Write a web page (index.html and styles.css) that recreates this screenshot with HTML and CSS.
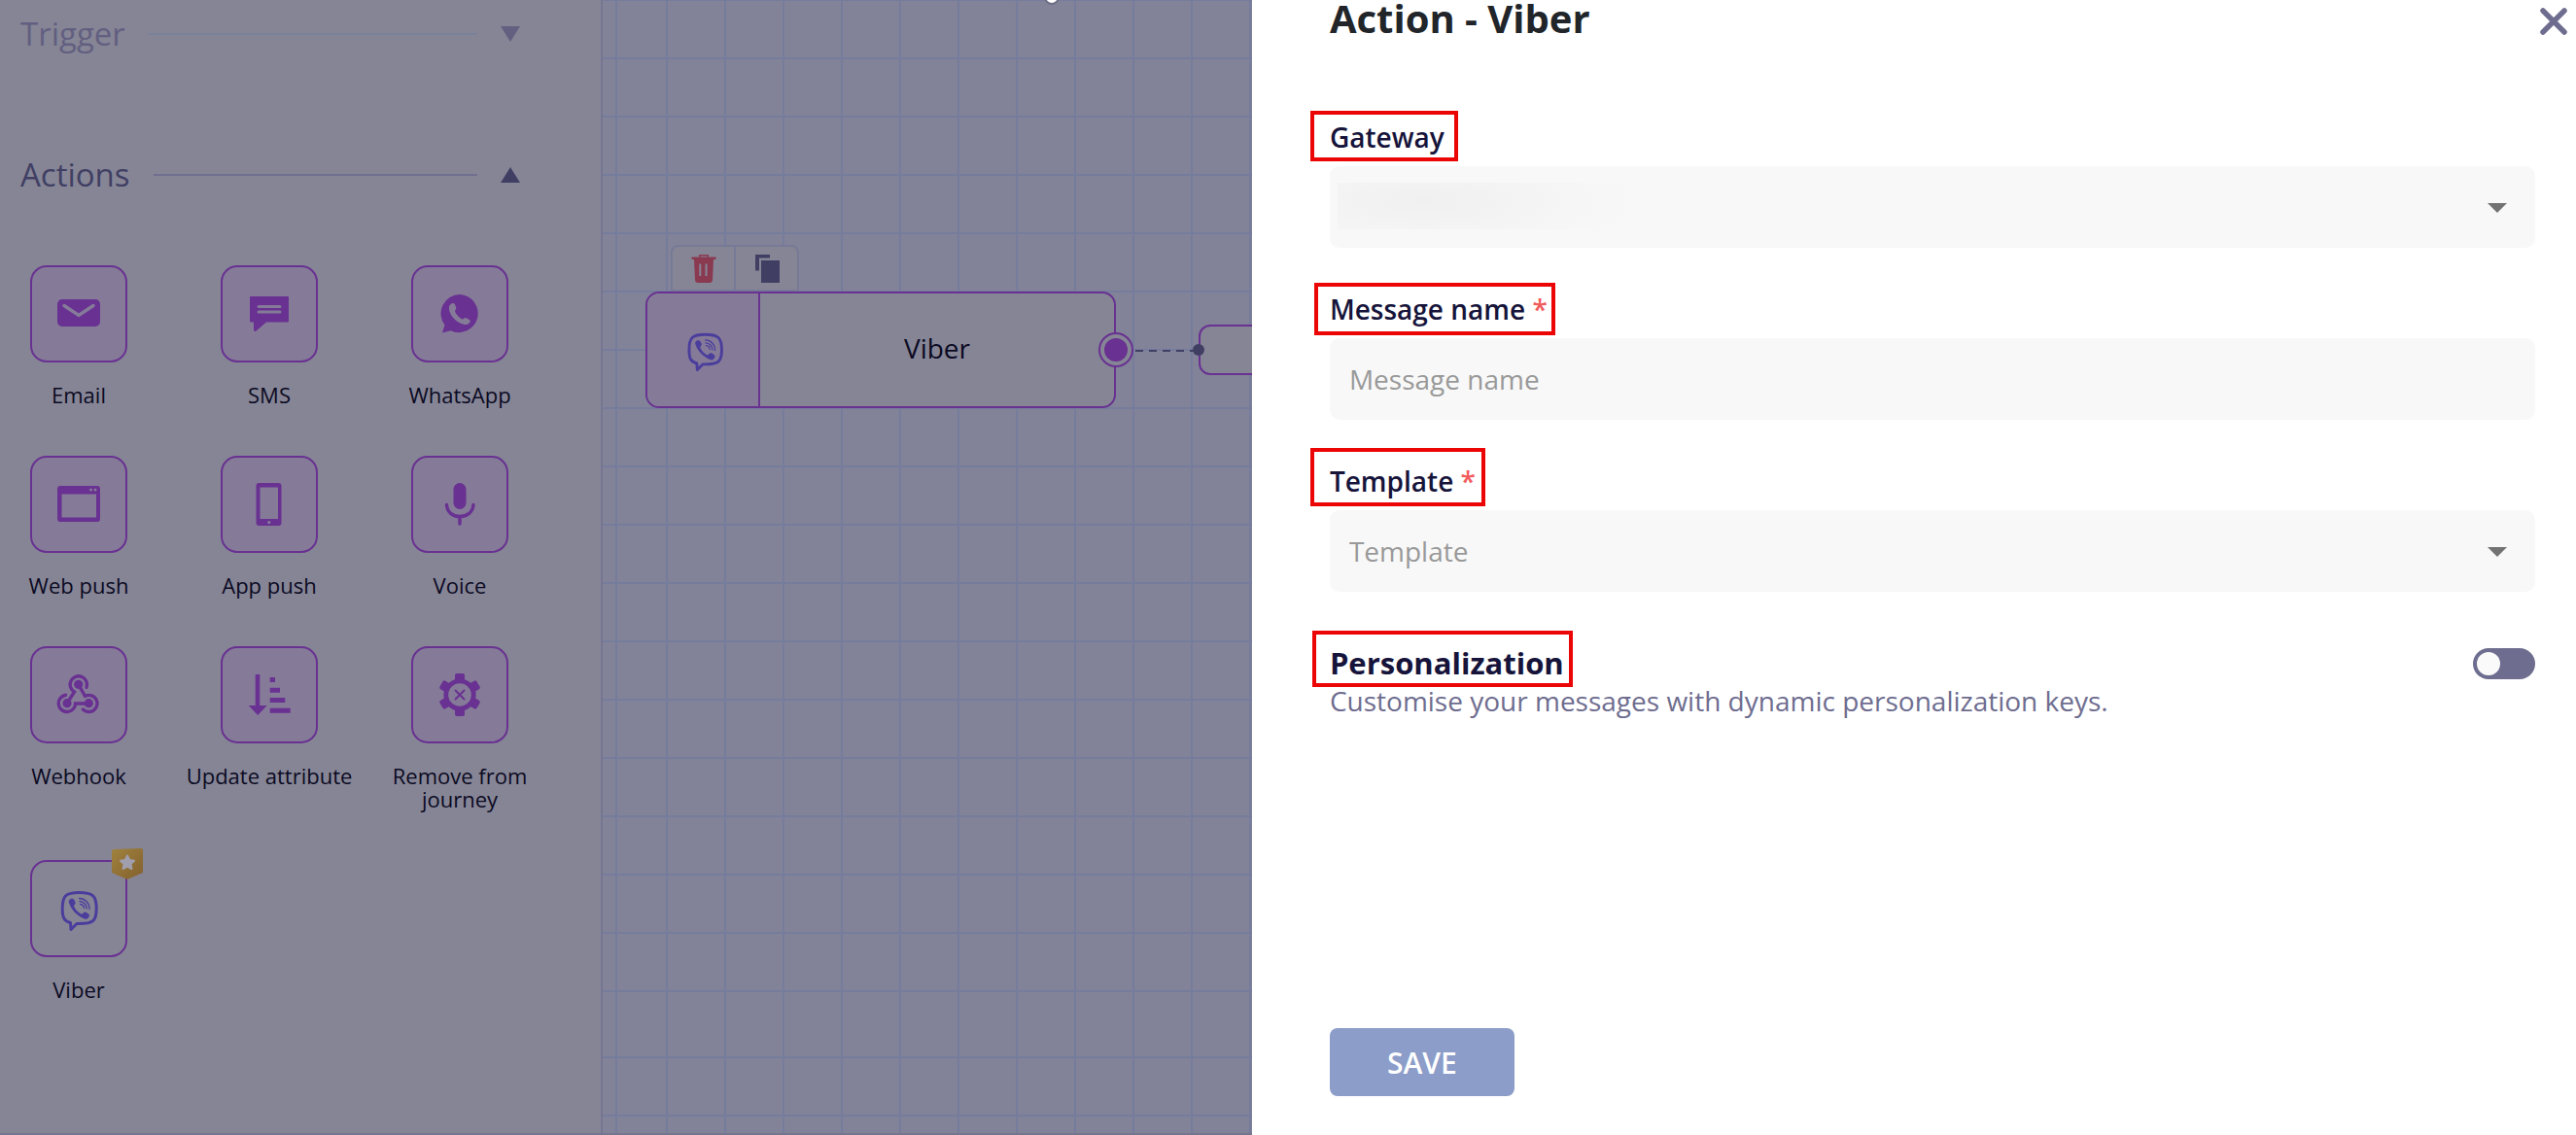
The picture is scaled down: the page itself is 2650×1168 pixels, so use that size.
FILE: index.html
```html
<!DOCTYPE html>
<html lang="en">
<head>
    <meta charset="UTF-8">
    <meta name="viewport" content="width=device-width, initial-scale=1.0">
    <title>Action - Viber</title>
    <link rel="stylesheet" href="styles.css">
</head>
<body>
    <svg class="defs" width="0" height="0" aria-hidden="true">
        <symbol id="viber" viewBox="0 0 48 48">
            <path d="M24.500 7.500C38 7.500 42.200 10.500 42.200 24C42.200 37 38.500 39.500 24.500 39.500L22 39.500L16 45.500L15.500 38.500C9 37 7.200 33.500 7.200 24C7.200 10.500 11 7.500 24.500 7.500Z" fill="none" stroke="currentColor" stroke-width="3" stroke-linejoin="round"/>
            <path d="M17 13.500C18.500 13.200 21.500 17.500 20.500 19C19.500 20.500 18.500 20.500 19.500 22.500C21 25.500 23.500 28 26.500 29.500C28 30.200 28.500 28 30 27.500C31.500 27.200 35.500 30 35 31.500C34.500 33 32.500 35.500 30.500 34.800C22.500 32 16 25 13.800 17.500C13.200 15.500 15.500 13.800 17 13.500Z" fill="currentColor"/>
            <path d="M24.500 13.500A10.500 10.500 0 0 1 35 24.500M25 16.500A7.500 7.500 0 0 1 32.200 24M25.500 19.500A4.500 4.500 0 0 1 29.500 23.500" fill="none" stroke="currentColor" stroke-width="1.300" stroke-linecap="round"/>
        </symbol>
    </svg>

    <div class="app">
        <!-- Journey elements -->
        <aside class="sidebar">
            <button class="group-title muted" type="button" aria-expanded="false">
                <span>Trigger</span><i class="rule"></i><i class="arrow down"></i>
            </button>
            <button class="group-title" type="button" aria-expanded="true">
                <span>Actions</span><i class="rule"></i><i class="arrow up"></i>
            </button>
            <ul class="tiles">
                <li class="tile">
                    <div class="tile-icon">
                        <svg viewBox="0 0 48 48"><rect x="2" y="9" width="44" height="28" rx="5" fill="currentColor"/><path d="M9 15.500L24 25.500L39 15.500" fill="none" stroke="#857b99" stroke-width="3.500" stroke-linecap="round"/></svg>
                    </div>
                    <span>Email</span>
                </li>
                <li class="tile">
                    <div class="tile-icon">
                        <svg viewBox="0 0 48 48"><path d="M5 6H43Q44 6 44 7V31Q44 32.500 43 32.500H21L10 42Q8 42.500 8 40V32.500H5Q4 32.500 4 31V7Q4 6 5 6Z" fill="currentColor"/><path d="M13 16.500H35M13 22H35" stroke="#857b99" stroke-width="3" stroke-linecap="round"/></svg>
                    </div>
                    <span>SMS</span>
                </li>
                <li class="tile">
                    <div class="tile-icon">
                        <svg viewBox="0 0 48 48"><path d="M24 4A19.600 19.600 0 1 1 14.500 41.200L6 43.500L8.500 35.500A19.600 19.600 0 0 1 24 4Z" fill="currentColor"/><path d="M15.500 13.500C17.500 12.500 19 13.500 19.500 15.500L20.300 18C20.500 20 18.500 20 19 21.500C20.500 25 23 27.500 26.500 29.500C28 30 28.500 27.500 30.500 28.200L34 30C36 31.500 33.500 34.500 31 35C22.500 35.500 12 25 13 17C13.300 15.500 14 14.300 15.500 13.500Z" fill="#857b99"/></svg>
                    </div>
                    <span>WhatsApp</span>
                </li>
                <li class="tile">
                    <div class="tile-icon">
                        <svg viewBox="0 0 48 48"><path fill-rule="evenodd" d="M5 5H43Q46 5 46 8V39Q46 42 43 42H5Q2 42 2 39V8Q2 5 5 5ZM6.500 13.500V37.500H42V13.500Z" fill="currentColor"/><circle cx="36.500" cy="9" r="1.500" fill="#857b99"/><circle cx="41" cy="9" r="1.500" fill="#857b99"/></svg>
                    </div>
                    <span>Web push</span>
                </li>
                <li class="tile">
                    <div class="tile-icon">
                        <svg viewBox="0 0 48 48"><path fill-rule="evenodd" d="M13.500 2H33.500Q36.500 2 36.500 5V43Q36.500 46 33.500 46H13.500Q10.500 46 10.500 43V5Q10.500 2 13.500 2ZM14.500 6.500V39H33V6.500Z" fill="currentColor"/><circle cx="23.800" cy="42.600" r="1.600" fill="#857b99"/></svg>
                    </div>
                    <span>App push</span>
                </li>
                <li class="tile">
                    <div class="tile-icon">
                        <svg viewBox="0 0 48 48"><rect x="17.500" y="2" width="13" height="27" rx="6.500" fill="currentColor"/><path d="M10.500 24.500C11 32 16.500 36.500 24 36.500S37.500 32 38 24.500M24 37V44" fill="none" stroke="currentColor" stroke-width="3.500" stroke-linecap="round"/></svg>
                    </div>
                    <span>Voice</span>
                </li>
                <li class="tile">
                    <div class="tile-icon">
                        <svg viewBox="0 0 48 48"><g fill="none" stroke="currentColor" stroke-width="3.400" stroke-linecap="round"><path d="M32 16.500A8.700 8.700 0 1 0 19.500 21L12 32.700"/><path d="M23.700 13.300L30.500 25.300A8.600 8.600 0 1 1 28.300 39"/><path d="M10.500 24.200A8.700 8.700 0 1 0 20.600 33L34.300 33"/></g><g fill="currentColor"><circle cx="23.700" cy="13.300" r="4.600"/><circle cx="12" cy="32.700" r="4.600"/><circle cx="34.300" cy="32.700" r="4.600"/></g></svg>
                    </div>
                    <span>Webhook</span>
                </li>
                <li class="tile">
                    <div class="tile-icon">
                        <svg viewBox="0 0 48 48"><path d="M9.700 3H14.300V35H21.700L12.200 45L2.700 35H9.700ZM24.700 6H30V11H24.700ZM24.700 16.700H35V21.700H24.700ZM24.700 27H40.300V32H24.700ZM24.700 37.700H45.700V42.700H24.700Z" fill="currentColor"/></svg>
                    </div>
                    <span>Update attribute</span>
                </li>
                <li class="tile">
                    <div class="tile-icon">
                        <svg viewBox="0 0 48 48">
                            <g fill="currentColor">
                                <rect x="19" y="2" width="10" height="12" rx="2"/>
                                <rect x="19" y="2" width="10" height="12" rx="2" transform="rotate(60 24 24)"/>
                                <rect x="19" y="2" width="10" height="12" rx="2" transform="rotate(120 24 24)"/>
                                <rect x="19" y="2" width="10" height="12" rx="2" transform="rotate(180 24 24)"/>
                                <rect x="19" y="2" width="10" height="12" rx="2" transform="rotate(240 24 24)"/>
                                <rect x="19" y="2" width="10" height="12" rx="2" transform="rotate(300 24 24)"/>
                            </g>
                            <circle cx="24" cy="24" r="14.200" fill="#857b99" stroke="currentColor" stroke-width="4.800"/>
                            <path d="M19.500 19.500L28.500 28.500M28.500 19.500L19.500 28.500" stroke="currentColor" stroke-width="2" stroke-linecap="round"/>
                        </svg>
                    </div>
                    <span>Remove from journey</span>
                </li>
                <li class="tile">
                    <div class="tile-icon plain">
                        <svg><use href="#viber"/></svg>
                        <svg class="badge" viewBox="0 0 32 32">
                            <defs>
                                <linearGradient id="gold" x1="0" y1="0" x2="1" y2="1">
                                    <stop offset="0" stop-color="#a0833e"/>
                                    <stop offset="1" stop-color="#83602d"/>
                                </linearGradient>
                            </defs>
                            <path d="M2 1L30 0Q32 0 32 2V24Q32 25 31 25.500L16 32L1 25.500Q0 25 0 24V3Q0 1 2 1Z" fill="url(#gold)"/>
                            <path d="M16 7.500L18.200 12L23 12.700L19.500 16L20.400 21L16 18.600L11.600 21L12.500 16L9 12.700L13.800 12Z" fill="#a19fae" stroke="#a19fae" stroke-width="2" stroke-linejoin="round"/>
                        </svg>
                    </div>
                    <span>Viber</span>
                </li>
            </ul>
        </aside>

        <!-- Journey canvas -->
        <main class="canvas">
            <svg class="grid-lines" aria-hidden="true">
                <defs>
                    <pattern id="cols" x="65" y="0" width="60" height="60" patternUnits="userSpaceOnUse"><rect width="2" height="60" fill="#757c9c"/></pattern>
                    <pattern id="rows" x="0" y="-1" width="60" height="60" patternUnits="userSpaceOnUse"><rect width="60" height="2" fill="#757c9c"/></pattern>
                    <pattern id="rows-next" x="0" y="1087" width="60" height="60" patternUnits="userSpaceOnUse"><rect width="60" height="2" fill="#757c9c"/></pattern>
                </defs>
                <rect x="13" y="0" width="2" height="100%" fill="#757c9c"/>
                <rect x="65" y="0" width="100%" height="100%" fill="url(#cols)"/>
                <rect x="0" y="0" width="100%" height="1060" fill="url(#rows)"/>
                <rect x="0" y="1080" width="100%" height="100%" fill="url(#rows-next)"/>
            </svg>
            <svg class="cursor-tip" viewBox="0 0 16 8" aria-hidden="true"><path d="M2 -2A5 4.500 0 0 0 14 -2" fill="#5f6078" stroke="#6e6f86" stroke-width="3"/><path d="M4 -2A4 3.500 0 0 0 12 -2" fill="none" stroke="#ffffff" stroke-width="3"/></svg>

            <div class="toolbar">
                <button type="button" aria-label="Delete">
                    <svg viewBox="0 0 30 30"><path fill-rule="evenodd" d="M10 1H20V3.500H27.500V6H25L24 27Q23.800 30 21 30H9Q6.200 30 6 27L5 6H2.500V3.500H10ZM11.500 2.500V3.500H18.500V2.500ZM10.300 10.500V23H12.300V10.500ZM16.500 10.500V23H18.500V10.500Z" fill="#8a3a50"/></svg>
                </button>
                <button type="button" aria-label="Copy">
                    <svg viewBox="0 0 30 30"><path d="M3 1H18V4.500H7V17.500H3ZM9 7H28V30H9Z" fill="#403f63"/></svg>
                </button>
            </div>
            <div class="node">
                <div class="node-icon"><svg><use href="#viber"/></svg></div>
                <div class="node-name">Viber</div>
            </div>
            <div class="node node-next"></div>
            <svg class="link" viewBox="0 0 112 40" aria-hidden="true">
                <circle cx="20" cy="20" r="17" fill="#868596" stroke="#693191" stroke-width="2"/>
                <circle cx="20" cy="20" r="12" fill="#693191"/>
                <path d="M40 21H100" stroke="#403f63" stroke-width="2" stroke-dasharray="8 6"/>
                <circle cx="105" cy="20" r="6" fill="#403f63"/>
            </svg>
        </main>

        <!-- Action settings -->
        <form class="panel">
            <header class="panel-header">
                <h1>Action - Viber</h1>
                <button class="close" type="button" aria-label="Close">
                    <svg viewBox="0 0 28 28"><path d="M3 3L25 25M25 3L3 25" stroke="#6e6d8f" stroke-width="5.500" stroke-linecap="round"/></svg>
                </button>
            </header>

            <div class="field">
                <label class="marked mark-gateway" for="gateway">Gateway</label>
                <div class="select">
                    <select class="redacted" id="gateway"><option></option></select>
                </div>
            </div>
            <div class="field">
                <label class="marked mark-message" for="message">Message name <span class="required">*</span></label>
                <input id="message" type="text" placeholder="Message name">
            </div>
            <div class="field">
                <label class="marked mark-template" for="template">Template <span class="required">*</span></label>
                <div class="select">
                    <select id="template"><option>Template</option></select>
                </div>
            </div>

            <div class="personalization">
                <div>
                    <label class="marked mark-personalization" for="personalization">Personalization</label>
                    <p>Customise your messages with dynamic personalization keys.</p>
                </div>
                <input class="toggle" id="personalization" type="checkbox">
            </div>

            <button class="save" type="submit">SAVE</button>
        </form>
    </div>
</body>
</html>
```
FILE: styles.css
```css
/* General */
*, *::before {
    box-sizing: border-box;
}

body {
    margin: 0;
    font-family: "Open Sans", "Noto Sans", sans-serif;
    color: #16143a;
    background-color: #fff;
}

button, input, select {
    font-family: inherit;
    margin: 0;
    border: 0;
}

button {
    padding: 0;
    background: none;
    cursor: pointer;
}

svg {
    display: block;
}

.defs {
    position: absolute;
}

.app {
    display: grid;
    grid-template-columns: 620px minmax(0, 1fr) 51.4%;
    min-height: 100vh;
}

/* Sidebar */
.sidebar {
    padding: 13px 83px 0 21px;
    background-color: #868596;
    border-right: 2px solid #757692;
    border-bottom: 2px solid #76758f;
}

.group-title {
    display: flex;
    align-items: center;
    gap: 24px;
    width: 100%;
    margin-bottom: 101px;
    color: #403f63;
    font-size: 33px;
    line-height: 44px;
}

.group-title.muted {
    color: #625f80;
}

.group-title + .group-title {
    margin-bottom: 71px;
}

.rule {
    flex: 1;
    height: 2px;
    background-color: #716f90;
}

.muted .rule {
    background-color: #7a819b;
}

.arrow {
    border: 10px solid transparent;
    border-width: 0 10px;
}

.arrow.down {
    border-top: 16px solid #625f80;
}

.arrow.up {
    border-bottom: 16px solid #403f63;
}

.tiles {
    display: grid;
    grid-template-columns: repeat(3, 196px);
    row-gap: 51px;
    margin: 0 0 0 -38px;
    padding: 0;
    list-style: none;
}

.tile {
    display: flex;
    flex-direction: column;
    align-items: center;
    gap: 21px;
    color: #0b0a22;
    font-size: 22px;
    line-height: 24px;
    text-align: center;
}

.tile-icon {
    position: relative;
    display: flex;
    align-items: center;
    justify-content: center;
    width: 100px;
    height: 100px;
    color: #693191;
    background-color: #857b99;
    border: 2px solid #693191;
    border-radius: 17px;
}

.tile-icon svg {
    width: 48px;
    height: 48px;
}

.tile-icon.plain {
    color: #4a3d9c;
    background: none;
}

.tile-icon .badge {
    position: absolute;
    top: -14px;
    right: -18px;
    width: 32px;
    height: 32px;
}

/* Canvas */
.canvas {
    position: relative;
    overflow: hidden;
    background-color: #828398;
    border-bottom: 2px solid #76758f;
}

.grid-lines {
    position: absolute;
    width: 100%;
    height: 100%;
}

.cursor-tip {
    position: absolute;
    top: 0;
    left: 454px;
    width: 16px;
    height: 8px;
}

.toolbar {
    position: absolute;
    top: 252px;
    left: 70px;
    display: flex;
    background-color: #868596;
    border: 2px solid #777a96;
    border-radius: 8px 8px 0 0;
}

.toolbar button {
    width: 63px;
    height: 44px;
    display: flex;
    align-items: center;
    justify-content: center;
}

.toolbar button + button {
    width: 65px;
    border-left: 2px solid #777a96;
}

.toolbar svg {
    width: 30px;
    height: 30px;
}

.node {
    position: absolute;
    top: 300px;
    left: 44px;
    display: flex;
    width: 484px;
    height: 120px;
    background-color: #868596;
    border: 2px solid #693191;
    border-radius: 14px;
    overflow: hidden;
}

.node-next {
    top: 334px;
    left: 613px;
    height: 52px;
    border-radius: 12px;
}

.node-icon {
    display: flex;
    align-items: center;
    justify-content: center;
    width: 116px;
    padding-left: 4px;
    color: #4a3d9c;
    background-color: #857b99;
    border-right: 2px solid #693191;
}

.node-icon svg {
    width: 46px;
    height: 46px;
}

.node-name {
    flex: 1;
    color: #0b0a22;
    font-size: 28px;
    line-height: 112px;
    text-align: center;
}

.link {
    position: absolute;
    top: 340px;
    left: 508px;
    width: 112px;
    height: 40px;
}

/* Panel */
.panel {
    display: flex;
    flex-direction: column;
    padding: 0 42px 40px 80px;
    background-color: #fff;
}

.panel-header {
    display: flex;
    justify-content: space-between;
    margin: 0 -33px 85px 0;
}

h1 {
    margin: 0;
    color: #212529;
    font-size: 40px;
    font-weight: 700;
    line-height: 38px;
}

.close {
    padding-top: 5px;
}

.close svg {
    width: 28px;
    height: 28px;
}

.field {
    display: flex;
    flex-direction: column;
    align-items: flex-start;
    gap: 12px;
    margin-bottom: 45px;
    font-size: 28px;
    line-height: 36px;
}

.field label {
    font-weight: 600;
}

.required {
    color: #f15b5b;
}

.field input, .select {
    width: 100%;
    height: 84px;
}

.field input, .field select {
    padding: 0 20px;
    color: #16143a;
    font-size: 28px;
    background-color: #f8f8f8;
    border-radius: 10px;
}

.field input::placeholder {
    color: #999;
}

.select {
    position: relative;
}

.select::after {
    content: "";
    position: absolute;
    top: 38px;
    right: 29px;
    border: 10px solid transparent;
    border-top-color: #737373;
    border-bottom: 0;
    pointer-events: none;
}

.field select {
    width: 100%;
    height: 100%;
    color: #999;
    appearance: none;
}

/* Hidden value of the gateway */
.field .redacted {
    background-image: radial-gradient(ellipse 70% 120% at 28% 40%, #f0f0f0, #f8f8f8);
    background-repeat: no-repeat;
    background-position: 8px 17px;
    background-size: 312px 48px;
}

.personalization {
    display: flex;
    justify-content: space-between;
    align-items: flex-start;
    margin-top: 7px;
}

.personalization label {
    display: inline-block;
    font-size: 31px;
    font-weight: 700;
    line-height: 42px;
}

.personalization p {
    margin: 0;
    color: #6e6d8f;
    font-size: 28px;
    line-height: 36px;
}

.toggle {
    display: flex;
    align-items: center;
    width: 64px;
    height: 32px;
    padding: 0 4px;
    background-color: #6e6d8f;
    border-radius: 16px;
    appearance: none;
}

.personalization .toggle {
    margin-top: 6px;
}

.toggle::before {
    content: "";
    width: 24px;
    height: 24px;
    background-color: #fafafa;
    border-radius: 50%;
}

.toggle:checked {
    justify-content: flex-end;
}

/* Red frames around the labels */
.marked {
    position: relative;
    z-index: 1;
}

.marked::before {
    content: "";
    position: absolute;
    top: -9px;
    left: -20px;
    width: 152px;
    height: 52px;
    border: 4px solid #eb0505;
}

.mark-message::before {
    left: -16px;
    width: 248px;
    height: 54px;
}

.mark-template::before {
    top: -16px;
    width: 180px;
    height: 60px;
}

.mark-personalization::before {
    top: -12px;
    left: -18px;
    width: 268px;
    height: 58px;
}

.save {
    align-self: flex-start;
    width: 190px;
    height: 70px;
    margin-top: auto;
    color: #fff;
    font-size: 30px;
    font-weight: 600;
    background-color: #8b9dc8;
    border-radius: 8px;
}
```
